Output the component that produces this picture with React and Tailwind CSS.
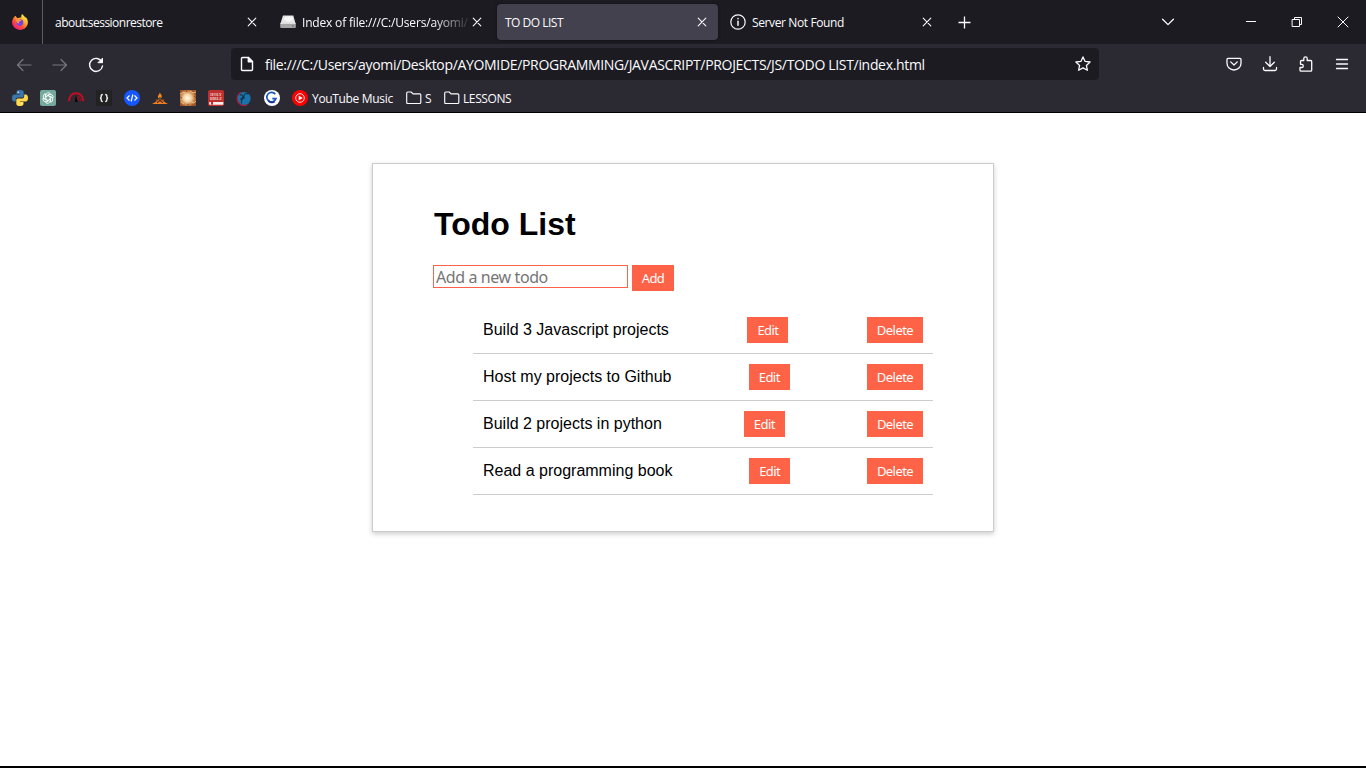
import React from "react";

const ui = "font-['Open_Sans','Noto_Sans',sans-serif]";

function Svg({ size = 16, className = "", children, sw = 1.2 }) {
  return (
    <svg width={size} height={size} viewBox="0 0 16 16" fill="none" stroke="currentColor" strokeWidth={sw} strokeLinecap="round" strokeLinejoin="round" className={"shrink-0 " + className}>
      {children}
    </svg>
  );
}

const Close = () => (
  <Svg className="text-[#fbfbfe]" sw={1.1}><path d="M4.2 4.2l7.6 7.6M11.8 4.2l-7.6 7.6" /></Svg>
);

function Firefox() {
  return (
    <svg width="16" height="16" viewBox="0 0 16 16" className="shrink-0">
      <defs>
        <linearGradient id="fx" x1="0.85" y1="0.1" x2="0.2" y2="0.95">
          <stop offset="0" stopColor="#fff44f" />
          <stop offset="0.35" stopColor="#ffa72a" />
          <stop offset="0.65" stopColor="#ff5038" />
          <stop offset="1" stopColor="#e8168b" />
        </linearGradient>
      </defs>
      <path fill="url(#fx)" d="M10.3 0c-1 .8-1.200 2-.9 3.200L5.300 4.200 3.500 1.700C1.500 3 .1 5.800.1 8.500A7.800 7.500 0 0 0 8 16c4.400 0 7.900-3.300 7.900-7.700 0-2.300-1.200-4.600-2.600-5.600l.2 1.300C12.600 2 11 1.500 10.300 0z" />
      <circle cx="8" cy="8.600" r="3.300" fill="#7542e5" />
      <path fill="#ff9640" d="M3.500 4.800c1.700-.8 3.800-.1 4.500 1 .7.3 1.300.2 1.500.3-.2.900-1.400 1.200-2.300 1.500-.5.800-.2 1.400.2 1.900-1.500.2-2.800-.8-2.900-2.500z" />
    </svg>
  );
}

function Drive() {
  return (
    <svg width="16" height="16" viewBox="0 0 16 16" className="shrink-0">
      <path d="M3 1.500h10.300L15.700 10H.300z" fill="#e4e4e4" />
      <ellipse cx="8.500" cy="4.800" rx="4.500" ry="2.600" fill="#f7f7f7" />
      <path d="M.200 9.500h15.600v3.400q0 1-1 1H1.200q-1 0-1-1z" fill="#a6a6a6" />
      <path d="M.500 9.500h15" stroke="#ddd" />
      <path d="M12 12h2" stroke="#666" />
    </svg>
  );
}

function Tab({ title, icon, active, fade, tracking }) {
  return (
    <div className={"flex h-9 w-[221px] shrink-0 items-center rounded px-2 " + (active ? "bg-[#42414d] shadow-[0_0_3px_rgba(0,0,0,0.5)]" : "")}>
      {icon && <span className="mr-1.5 flex w-4 shrink-0">{icon}</span>}
      <span className={"min-w-0 flex-1 whitespace-nowrap pt-0.5 text-[12px] leading-4 " + tracking + (fade ? " [mask-image:linear-gradient(to_right,black_78%,transparent_102%)]" : "")}>{title}</span>
      <Close />
    </div>
  );
}

const bookmarks = [
  <svg width="16" height="16" viewBox="0 0 16 16">
    <path fill="#3b77a8" d="M7.900 0C4.800 0 4.500 1.300 4.500 2.200v1.700H8v.6H2.300C.8 4.500 0 5.900 0 8s.9 3.500 2.200 3.500h1.600V9.600c0-1.200 1-2.100 2.200-2.100h4c1 0 1.700-.8 1.700-1.800V2.300C11.700.9 10.500 0 7.900 0z" />
    <path fill="#ffd94a" d="M8.100 16c3.100 0 3.400-1.300 3.400-2.200v-1.700H8v-.6h5.700C15.200 11.500 16 10.100 16 8s-.9-3.500-2.200-3.500h-1.600v1.900c0 1.200-1 2.100-2.200 2.100H6c-1 0-1.700.8-1.700 1.800v3.400C4.300 15.100 5.500 16 8.100 16z" />
    <circle cx="6.200" cy="2.200" r=".7" fill="#fff" /><circle cx="9.800" cy="13.800" r=".7" fill="#fff" />
  </svg>,
  <svg width="16" height="16" viewBox="0 0 16 16" fill="none">
    <rect width="16" height="16" rx="2" fill="#74aa9c" />
    <g stroke="#fff" strokeWidth=".85" strokeLinejoin="round">
      {[0, 60, 120, 180, 240, 300].map((a) => (
        <path key={a} transform={`rotate(${a} 8 8)`} d="M5.900 9.200V5.200a2.500 2.500 0 0 1 4.500-1.500M7 5.500l3.300-1.900" />
      ))}
    </g>
  </svg>,
  <svg width="16" height="16" viewBox="0 0 16 16" fill="none">
    <path d="M1 11.300C1 6 4 3.300 8 3.300s7 2.700 7 7.700" stroke="#c40d20" strokeWidth="2" />
    <path d="M8.500 6c2.500.2 3.900 2 4.200 5M8.500 8c1.600.3 2.200 1.400 2.400 3" stroke="#a50d1c" strokeWidth="1.200" />
    <path d="M6.800 12L8 5l1.800 7z" fill="#08080a" />
  </svg>,
  <svg width="16" height="16" viewBox="0 0 16 16" fill="none">
    <rect width="16" height="16" fill="#222" />
    <path d="M6.800 4.500c-1.300 0-1.600.4-1.600 1.200v1c0 .7-.4 1.200-1.200 1.300.8.100 1.200.6 1.200 1.300v1c0 .8.3 1.200 1.600 1.200M9.200 4.500c1.300 0 1.600.4 1.600 1.200v1c0 .7.4 1.200 1.200 1.300-.8.100-1.200.6-1.200 1.300v1c0 .8-.3 1.200-1.600 1.200" stroke="#eee" strokeWidth="1.400" />
  </svg>,
  <svg width="16" height="16" viewBox="0 0 16 16" fill="none">
    <circle cx="8" cy="8" r="8" fill="#1557ff" />
    <path d="M5.500 5.500L3 8l2.500 2.500M10.500 5.500L13 8l-2.500 2.500M8.900 4.500l-1.800 7" stroke="#fff" strokeWidth="1.200" />
  </svg>,
  <svg width="16" height="16" viewBox="0 0 16 16" fill="none">
    <path d="M7.800 2.500c.5 1.700 3.400 2.800 1.200 6H6.700C4.500 6 7.500 5 7.800 2.500z" fill="#f58a1f" />
    <path d="M4.500 9.500h7l1 2.300h-9z" fill="#b65d1d" />
    <path d="M0 14l4-2.300h8L16 14z" fill="#f08020" />
    <path d="M5 13l3-2.500 3 2.500M8 7v2" stroke="#472817" strokeWidth="1" />
  </svg>,
  <svg width="16" height="16" viewBox="0 0 16 16" fill="none">
    <defs><radialGradient id="glow"><stop offset="0" stopColor="#fffbe9" /><stop offset=".4" stopColor="#f3d5a5" /><stop offset=".75" stopColor="#c57e45" /><stop offset="1" stopColor="#8e4a22" /></radialGradient></defs>
    <rect width="16" height="16" fill="#9d582d" /><circle cx="7.500" cy="8" r="9.500" fill="url(#glow)" />
    <path d="M0 4l4-2 1 2M10 1l3 2 3-1M1 12l3 2M11 12l3 1 2-2" stroke="#f0bf86" strokeWidth=".9" />
    <path d="M0 7l2 1M6 0l1 2M14 6l2 2M7 15l2-1" stroke="#8c4a24" strokeWidth=".9" />
  </svg>,
  <svg width="16" height="16" viewBox="0 0 16 16" fill="none">
    <rect width="16" height="16" rx="2" fill="#bd302e" />
    <path d="M1.500 12h13.800v2.700H1.500q-1-1.300 0-2.700z" fill="#f6eeee" />
    <path d="M3 12h2v3l-1-.7-1 .7z" fill="#c6262a" />
    <text x="8" y="5.900" textAnchor="middle" fontSize="4" fontWeight="700" fill="#f2cfcc" fontFamily="Liberation Serif">HOLY</text>
    <text x="8" y="9.500" textAnchor="middle" fontSize="4" fontWeight="700" fill="#f2cfcc" fontFamily="Liberation Serif">BIBLE</text>
  </svg>,
  <svg width="16" height="16" viewBox="0 0 16 16" fill="none">
    <circle cx="8" cy="8.500" r="6.600" fill="#1974ae" />
    <path d="M5 2.200A7 7 0 0 0 4 14.200c2 1.600 5 1.900 7.500.6" stroke="#a61d35" strokeWidth="1.200" />
    <path d="M3.500 4.500c2 .2 3.500 1.500 4 3M8 8c-2 1-3 3-2.500 5.500M4 9.500l3-2 2-3.500 3-1" stroke="#173550" strokeWidth="1.100" />
    <circle cx="7.500" cy="7.500" r="1.200" fill="#173550" /><circle cx="12" cy="3.600" r="1" fill="#173550" />
  </svg>,
  <svg width="16" height="16" viewBox="0 0 16 16" fill="none">
    <circle cx="8" cy="8" r="8" fill="#fff" />
    <path d="M11.300 4.300A4.700 4.700 0 1 0 12 8.600H8.300" stroke="#1b57c4" strokeWidth="1.700" />
    <path d="M4.200 10.500a4.700 4.700 0 0 0 6.500 1.100" stroke="#172f91" strokeWidth="1.700" />
  </svg>,
];

const Folder = () => (
  <svg width="16" height="16" viewBox="0 0 16 16" fill="none" stroke="#fbfbfe" strokeWidth="1.150" strokeLinejoin="round" className="shrink-0">
    <path d="M.700 12.500V3q0-1 1-1h3.500l1.800 1.800h6.800q1 0 1 1v7.700q0 1-1 1H1.700q-1 0-1-1z" />
  </svg>
);

const Button = ({ children, w }) => (
  <button className={"flex h-[26px] shrink-0 items-center justify-center bg-[#ff6347] font-['Noto_Sans',sans-serif] text-[13px] leading-4 text-white " + w}>
    <span className="tracking-[-0.55px]">{children}</span>
  </button>
);

const todos = ["Build 3 Javascript projects", "Host my projects to Github", "Build 2 projects in python", "Read a programming book"];

export default function App() {
  return (
    <div className={"flex h-[768px] w-[1366px] flex-col overflow-hidden border-b-2 border-black bg-white text-[#fbfbfe] " + ui}>
      <div className="flex h-11 shrink-0 items-center bg-[#1c1b22]">
        <div className="flex h-full w-[43px] items-center border-r border-[#5b5b66] pl-3"><Firefox /></div>
        <div className="ml-1 flex gap-1">
          <Tab title="about:sessionrestore" tracking="tracking-[-0.53px]" />
          <Tab title="Index of file:///C:/Users/ayomi/" icon={<Drive />} fade tracking="tracking-[-0.18px]" />
          <Tab title="TO DO LIST" active tracking="tracking-[-0.5px]" />
          <Tab
            title="Server Not Found"
            tracking="tracking-[-0.38px]"
            icon={<Svg sw={1.200}><circle cx="8" cy="8" r="7.200" /><path d="M8 7.300v4M8 4.600v.1" strokeWidth="1.500" /></Svg>}
          />
        </div>
        <Svg className="ml-[13px]" sw={1.300}><path d="M8.500 2.500v12M2.500 8.500h12" strokeLinecap="butt" /></Svg>
        <Svg className="ml-[188px]" sw={1.300}><path d="M2.600 5.200L8 10.600l5.400-5.400" /></Svg>
        <Svg className="ml-[67px]" sw={1}><path d="M3 7.500h10" strokeLinecap="butt" /></Svg>
        <Svg className="ml-[30px]" sw={1}><path d="M3.500 5.500h7v7h-7zM5.500 5.500v-2h7v7h-2" strokeLinejoin="miter" /></Svg>
        <Svg className="ml-[30px]" sw={1}><path d="M3 3l10 10M13 3L3 13" /></Svg>
      </div>

      <div className="flex h-[40px] shrink-0 items-center bg-[#2b2a33] pl-4">
        <div className="flex gap-5 pt-px">
          <Svg className="text-[#77767e]"><path d="M15 8H1.500M7 2.500L1.500 8 7 13.500" /></Svg>
          <Svg className="text-[#77767e]"><path d="M1 8h13.500M9 2.500L14.500 8 9 13.500" /></Svg>
          <Svg sw={1.400}><path d="M13.900 5A6.500 6.500 0 1 0 14.500 9" /><path d="M14.500 1.500v4.200h-4.200z" fill="currentColor" strokeWidth="1" /></Svg>
        </div>
        <div className="ml-[127px] flex h-8 w-[868px] items-center rounded bg-[#1c1b22] px-2">
          <Svg sw={1.400}><path d="M3.500 1.500h6l4 4v8q0 1-1 1h-9q-1 0-1-1v-11q0-1 1-1z" /><path d="M9.300 1.500v4.200h4.200z" fill="currentColor" /></Svg>
          <span className="ml-2.5 flex-1 whitespace-nowrap pt-0.5 text-[14px] leading-5 tracking-[-0.327px]">file:///C:/Users/ayomi/Desktop/AYOMIDE/PROGRAMMING/JAVASCRIPT/PROJECTS/JS/TODO LIST/index.html</span>
          <Svg sw={1.300}><path d="M8 .9l2.100 4.500 5 .6-3.700 3.400 1 4.900L8 11.900l-4.400 2.400 1-4.900L.9 6l5-.6z" /></Svg>
        </div>
        <div className="ml-[127px] flex gap-5">
          <Svg sw={1.300}><path d="M2 2.300h12q1 0 1 1v4a7 6.700 0 0 1-14 0v-4q0-1 1-1z" /><path d="M4.700 5.900L8 9l3.300-3.100" /></Svg>
          <Svg sw={1.300}><path d="M8 .7v9.800M3.700 6.300L8 10.500l4.300-4.200M1.500 11.500V13q0 1.500 1.500 1.500h10q1.500 0 1.500-1.500v-1.500" /></Svg>
          <Svg sw={1.300}><path d="M2.500 5.500q0-1 1-1h2.300V2.600a1.700 1.700 0 0 1 3.400 0v1.900h3.500q1 0 1 1v8.700q0 1-1 1H3q-1 0-1-1v-2.700h1.700a1.600 1.600 0 0 0 0-3.200H2.500z" /></Svg>
          <Svg sw={1.300}><path d="M2.500 3.500h11M2.500 8h11M2.500 12.500h11" /></Svg>
        </div>
      </div>

      <div className="flex h-[29px] shrink-0 items-center border-b border-black bg-[#2b2a33] pl-3 text-[12px] leading-4">
        <div className="flex gap-3">{bookmarks.map((b, i) => <span key={i} className="flex">{b}</span>)}</div>
        <div className="ml-3 flex w-[114px] items-center gap-1 whitespace-nowrap">
          <svg width="16" height="16" viewBox="0 0 16 16" fill="none" className="shrink-0"><circle cx="8" cy="8" r="8" fill="#f00" /><circle cx="8" cy="8" r="4.300" stroke="#fff" strokeWidth=".9" /><path d="M6.700 5.500v5l4-2.500z" fill="#fff" /></svg>
          <span className="pt-0.5 tracking-[-0.33px]">YouTube Music</span>
        </div>
        <div className="flex w-[38px] items-center gap-[3px]"><Folder /><span className="pt-0.5">S</span></div>
        <div className="flex items-center gap-[3px]"><Folder /><span className="pt-0.5 tracking-[-0.4px]">LESSONS</span></div>
      </div>

      <main className="flex flex-1 items-start justify-center bg-white pt-[50px] font-['Liberation_Sans',Arial,sans-serif] text-black">
        <section className="h-[369px] w-[622px] border border-[#ccc] px-[60px] pt-[42px] shadow-[0_2px_5px_rgba(0,0,0,0.2)]">
          <h1 className="pl-px text-[32px] font-bold leading-[37px]">Todo List</h1>
          <div className="mt-[22px] flex items-start gap-1">
            <input className="h-[23px] w-[195px] border border-[#ff6347] px-0.5 font-['Noto_Sans',sans-serif] text-[16px] leading-5 tracking-[-0.4px] outline-none placeholder:text-[#757575]" placeholder="Add a new todo" />
            <Button w="w-[42px]">Add</Button>
          </div>
          <ul className="ml-10 mt-4">
            {todos.map((t) => (
              <li key={t} className="flex h-[47px] items-center justify-between border-b border-[#ccc] px-2.5 text-[16px] leading-[18px]">
                <span>{t}</span>
                <Button w="w-[41px]">Edit</Button>
                <Button w="w-[56px]">Delete</Button>
              </li>
            ))}
          </ul>
        </section>
      </main>
    </div>
  );
}
